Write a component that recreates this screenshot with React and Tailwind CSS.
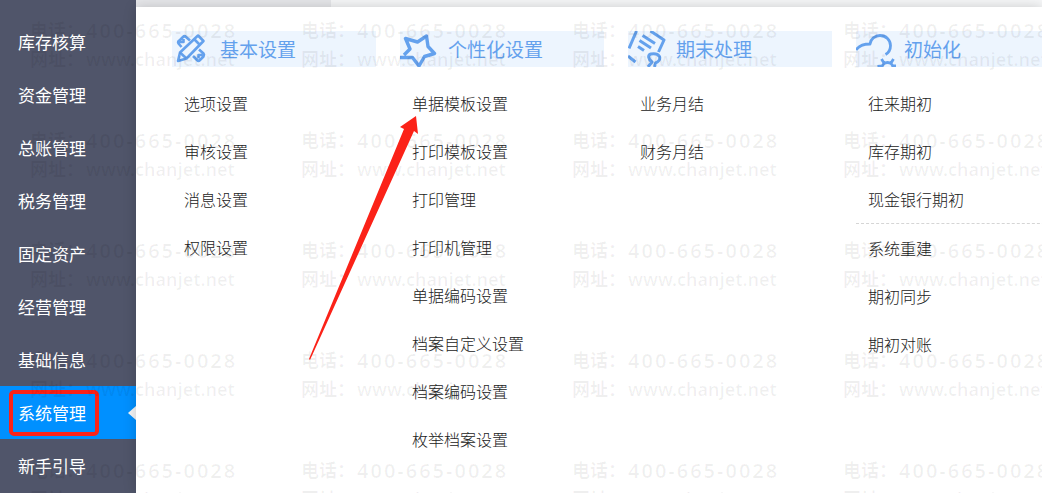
import { clsx } from 'clsx'

const sidebarItems = ['库存核算', '资金管理', '总账管理', '税务管理', '固定资产', '经营管理', '基础信息', '系统管理', '新手引导']
const activeItem = '系统管理'

const columns = [
  { title: '基本设置', Icon: DesignIcon, groups: [['选项设置', '审核设置', '消息设置', '权限设置']] },
  {
    title: '个性化设置',
    Icon: StarIcon,
    groups: [['单据模板设置', '打印模板设置', '打印管理', '打印机管理', '单据编码设置', '档案自定义设置', '档案编码设置', '枚举档案设置']],
  },
  { title: '期末处理', Icon: NoteIcon, groups: [['业务月结', '财务月结']] },
  { title: '初始化', Icon: CloudGearIcon, groups: [['往来期初', '库存期初', '现金银行期初'], ['系统重建', '期初同步', '期初对账']] },
]

const iconProps = {
  viewBox: '0 0 40 36',
  className: 'h-9 w-10 shrink-0',
  fill: 'none',
  stroke: 'currentColor',
  strokeWidth: 2.6,
  strokeLinejoin: 'round',
  'aria-hidden': true,
}

function DesignIcon() {
  return (
    <svg {...iconProps} strokeWidth={2.6}>
      <path d="M6 30l2-8.500L26 4.500l5.500 5.500L14.500 27.500z" />
      <path d="M22.500 8.500l5 5M8 21.500l6.500 6" />
      <path d="M9.500 16l-3-3.500c-1-1.500 0-2.500 1-3L11 6c1-1 2-1 3 0l4 3.500M7.500 11h4V8" />
      <path d="M27 18.500l4.500 4c1 1 .5 2 0 3L28 29c-1 1-2 1-3 0l-4-4M30.500 24h-4v3.500" />
    </svg>
  )
}

function StarIcon() {
  return (
    <svg {...iconProps} strokeWidth={3.4}>
      <path d="M4 24l6-6L5.500 7.500 17.500 11l9-6 1.500 10.500 6.500 7-10 3L19 35l-6.500-8.500H0" />
    </svg>
  )
}

function NoteIcon() {
  return (
    <svg {...iconProps} strokeWidth={3}>
      <path d="M8.500 0L1 17.500M0 25l7.500 6M22.500 0L36 9l-5.500 12" />
      <path d="M14.500 4.500L27 12.500M11.500 9.500l11.500 7.500M10 15.500l6 4" />
      <path d="M20 36l4-5c-4-3-4.500-7-1-8 3-.5 7 0 8.500 2.500 1 3-1 5.500-4 6.500l-1 4" />
    </svg>
  )
}

function CloudGearIcon() {
  return (
    <svg {...iconProps} strokeWidth={2.8}>
      <path d="M0 19c3-4.500 8-6 14-6C14.500 8 19 4.500 24 4.500c6 0 10.500 4.500 10.500 10 0 4-1.500 7-5 9" />
      <path d="M26 37c0-3.500 2.500-5.500 5.500-5.500S37 33.500 37 37M28 32l-2.500-4M35 32l2.500-4M26.500 35l-5 .5M36.500 35H40" />
    </svg>
  )
}

function Watermark() {
  return (
    <div
      aria-hidden="true"
      className="pointer-events-none absolute inset-0 grid grid-cols-[repeat(4,271px)] content-start gap-y-[52px] overflow-hidden pt-4 pl-[30px] font-['Noto_Sans','Noto_Sans_CJK_SC',sans-serif] text-[18px] leading-[29px] font-semibold whitespace-nowrap text-black/6"
    >
      {Array.from({ length: 20 }, (_, i) => (
        <div key={i} className="grid grid-cols-[56px_1fr]">
          <span>电话：</span>
          <span className="text-[20px] tracking-widest">400-665-0028</span>
          <span>网址：</span>
          <span>www.chanjet.net</span>
        </div>
      ))}
    </div>
  )
}

function Sidebar() {
  return (
    <nav className="w-[136px] shrink-0 bg-[#50556a] pt-[15px] text-[17px] text-white">
      {sidebarItems.map((item) => {
        const active = item === activeItem
        return (
          <a
            key={item}
            href="#"
            aria-current={active ? 'page' : undefined}
            className={clsx('flex h-[53px] items-center justify-between', active ? 'bg-[#0090ff] pl-[9px]' : 'pl-[18px]')}
          >
            {active ? (
              <>
                <span className="flex h-[46px] w-[90px] items-center rounded-[5px] border-4 border-[#fb2218] pl-[5px]">{item}</span>
                <svg viewBox="0 0 8 14" className="h-[14px] w-2 fill-[#f4f5f6]" aria-hidden="true">
                  <path d="M8 0L0 7l8 7z" />
                </svg>
              </>
            ) : (
              item
            )}
          </a>
        )
      })}
    </nav>
  )
}

function MenuColumn({ title, Icon, groups }) {
  return (
    <section className="w-[204px] shrink-0">
      <h2 className="mb-3 flex h-9 items-center gap-2 bg-[#edf5fe] text-[19px] text-[#64a1ed]">
        <Icon />
        {title}
      </h2>
      {groups.map((items, i) => (
        <ul key={items[0]} className={clsx(i > 0 && 'border-t border-dashed border-[#d5d5d5]')}>
          {items.map((item) => (
            <li key={item}>
              <a href="#" className="flex h-12 items-center pl-3 text-[16px] font-light text-[#222]">
                {item}
              </a>
            </li>
          ))}
        </ul>
      ))}
    </section>
  )
}

// Red arrow pointing at 单据模板设置
function Arrow() {
  return (
    <svg viewBox="0 0 110 245" className="pointer-events-none absolute top-[115px] left-[308px] h-[245px] w-[110px] fill-[#fb2218]" aria-hidden="true">
      <path d="M1 244L96 14l-4-2 16-11 2 18-4-3L2 245z" />
    </svg>
  )
}

export default function App() {
  return (
    <div className="relative flex min-h-screen overflow-hidden bg-white font-['Noto_Sans_CJK_SC',sans-serif]">
      <Sidebar />
      <div className="flex min-w-0 flex-1 flex-col">
        <div className="flex h-[7px] bg-[#f6f7f8]">
          <div className="w-[195px] bg-[#e6e7ea]" />
        </div>
        <main className="flex flex-1 gap-6 bg-white pt-6 pl-9 shadow-[0_0_12px_rgba(0,0,0,0.18)]">
          {columns.map((column) => (
            <MenuColumn key={column.title} {...column} />
          ))}
        </main>
      </div>
      <Watermark />
      <Arrow />
    </div>
  )
}
